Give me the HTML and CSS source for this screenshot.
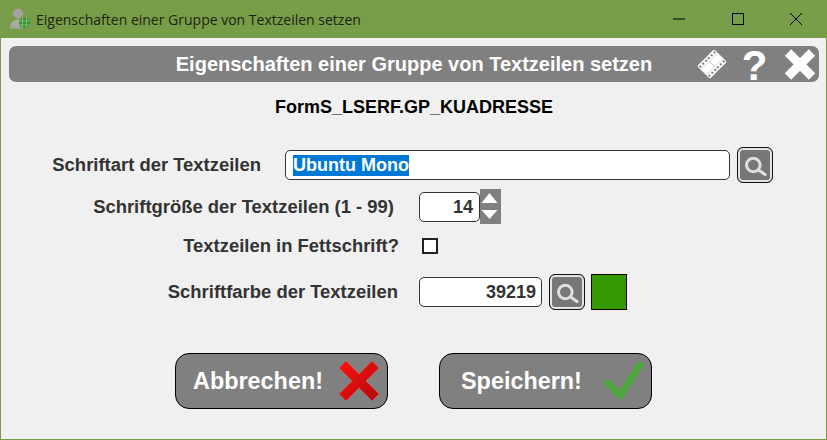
FILE: index.html
```html
<!DOCTYPE html>
<html lang="de">
<head>
    <meta charset="UTF-8">
    <title>Eigenschaften einer Gruppe von Textzeilen setzen</title>
    <link rel="stylesheet" href="styles.css">
</head>
<body>
    <div class="window">
        <div class="titlebar">
            <svg class="app-icon" width="22" height="22" viewBox="0 0 22 22">
                <circle cx="8" cy="5.500" r="5" fill="#a3a3a3"/>
                <path d="M0 20.500c0-6 3-9 8-9s8 3 8 9z" fill="#a9a9a3"/>
                <circle cx="14.500" cy="15" r="5.500" fill="#3f8f3a"/>
                <path d="M9.500 13h10M9.500 17h10M12.500 10v10M16.500 10v10" stroke="#7cc06f" stroke-width="1"/>
            </svg>
            <span class="title-text">Eigenschaften einer Gruppe von Textzeilen setzen</span>
            <div class="win-controls">
                <svg width="46" height="38" viewBox="0 0 46 38"><path d="M16 19h12" stroke="#000"/></svg>
                <svg width="46" height="38" viewBox="0 0 46 38"><rect x="17.5" y="13.5" width="11" height="11" fill="none" stroke="#000"/></svg>
                <svg width="46" height="38" viewBox="0 0 46 38"><path d="M17 13l12 12M29 13L17 25" stroke="#000"/></svg>
            </div>
        </div>

        <div class="content">
            <header class="head-bar">
                <h1>Eigenschaften einer Gruppe von Textzeilen setzen</h1>
                <div class="head-icons">
                    <svg width="34" height="36" viewBox="0 0 34 36">
                        <g transform="rotate(-45 17 18)">
                            <rect x="5" y="9" width="24" height="18" rx="1.500" fill="#fff"/>
                            <path d="M6 11.500h22M6 24.500h22" stroke="#808080" stroke-width="2" stroke-dasharray="2 2"/>
                            <path d="M17 14v8" stroke="#cfcfcf" stroke-width="1"/>
                            <path d="M6 14h22M6 22h22" stroke="#dedede" stroke-width="1"/>
                        </g>
                    </svg>
                    <span class="help-mark">?</span>
                    <svg width="34" height="36" viewBox="0 0 34 36">
                        <path d="M5 6.500l24 24M29 6.500l-24 24" stroke="#fff" stroke-width="9"/>
                    </svg>
                </div>
            </header>

            <p class="form-name">FormS_LSERF.GP_KUADRESSE</p>

            <form class="props">
                <div class="row row-font">
                    <label>Schriftart der Textzeilen</label>
                    <div class="field field-font"><span class="selected">Ubuntu Mono</span></div>
                    <button type="button" class="lookup">
                        <svg width="26" height="26" viewBox="0 0 26 26">
                            <circle cx="11.300" cy="13" r="6.800" fill="none" stroke="#dfdfdf" stroke-width="3"/>
                            <path d="M16.500 18l6.500 4.500" stroke="#dfdfdf" stroke-width="3.200" stroke-linecap="round"/>
                        </svg>
                    </button>
                </div>

                <div class="row row-size">
                    <label>Schriftgröße der Textzeilen (1 - 99)</label>
                    <div class="field field-size">14</div>
                    <div class="spinner">
                        <svg width="21" height="35" viewBox="0 0 21 35">
                            <path d="M9.500 4l8 10h-16zM9.500 30l8-9h-16z" fill="#fff"/>
                        </svg>
                    </div>
                </div>

                <div class="row row-bold">
                    <label>Textzeilen in Fettschrift?</label>
                    <span class="check"></span>
                </div>

                <div class="row row-color">
                    <label>Schriftfarbe der Textzeilen</label>
                    <div class="field field-color">39219</div>
                    <button type="button" class="lookup">
                        <svg width="26" height="26" viewBox="0 0 26 26">
                            <circle cx="11.300" cy="13" r="6.800" fill="none" stroke="#dfdfdf" stroke-width="3"/>
                            <path d="M16.500 18l6.500 4.500" stroke="#dfdfdf" stroke-width="3.200" stroke-linecap="round"/>
                        </svg>
                    </button>
                    <span class="swatch"></span>
                </div>
            </form>

            <div class="actions">
                <button type="button" class="big-btn btn-cancel">
                    <span>Abbrechen!</span>
                    <svg width="42" height="42" viewBox="0 0 42 42">
                        <defs>
                            <linearGradient id="red" x1="0" y1="0" x2="1" y2="1">
                                <stop offset="0" stop-color="#ff1208"/>
                                <stop offset="1" stop-color="#b00a10"/>
                            </linearGradient>
                        </defs>
                        <path d="M8 1l13 13L34 1l7 7-13 13 13 13-7 7-13-13L8 41l-7-7 13-13L1 8z" fill="url(#red)" stroke="#c8585a" stroke-width="1" stroke-linejoin="round"/>
                    </svg>
                </button>
                <button type="button" class="big-btn btn-save">
                    <span>Speichern!</span>
                    <svg width="42" height="42" viewBox="0 0 42 42">
                        <path d="M6 23l12 13L38 5" fill="none" stroke="#4fa53f" stroke-width="7" stroke-linecap="round" stroke-linejoin="round"/>
                    </svg>
                </button>
            </div>
        </div>
    </div>
</body>
</html>
```

FILE: styles.css
```css
html, body {
    margin: 0;
    height: 100%;
}
body {
    background-color: #f0f0f0;
    font-family: "Liberation Sans", Arial, sans-serif;
    overflow: hidden;
}
.window {
    height: 440px;
    box-sizing: border-box;
    border: 1px solid #789d48;
    border-top: 0;
    display: flex;
    flex-direction: column;
}
.titlebar {
    height: 38px;
    flex: none;
    background-color: #789d48;
    display: flex;
    align-items: center;
    padding-left: 9px;
}
.app-icon {
    margin-right: 4px;
}
.title-text {
    font-family: "Open Sans", sans-serif;
    font-size: 14px;
    color: #1c2410;
}
.win-controls {
    margin-left: auto;
    display: flex;
    margin-right: 7px;
    gap: 12px;
}
.content {
    flex: 1;
    padding: 8px 7px 0 8px;
}
.head-bar {
    height: 36px;
    background-color: #808080;
    border-radius: 7px;
    display: flex;
    align-items: center;
    justify-content: center;
    position: relative;
}
h1 {
    margin: 0;
    font-size: 20px;
    color: #fff;
}
.head-icons {
    position: absolute;
    right: 2px;
    top: 0;
    display: flex;
    align-items: center;
    height: 36px;
}
.help-mark {
    width: 54px;
    padding-right: 3px;
    margin-top: 3px;
    box-sizing: border-box;
    text-align: center;
    font-size: 42px;
    line-height: 36px;
    font-weight: bold;
    color: #fff;
}
.form-name {
    margin: 15px 0 0;
    height: 20px;
    line-height: 20px;
    text-align: center;
    font-size: 18px;
    font-weight: bold;
    color: #000;
}
.props {
    margin-top: 30px;
}
.row {
    display: flex;
    align-items: center;
    font-size: 18.450px;
    font-weight: bold;
    color: #333;
}
.row label {
    text-align: right;
    flex: none;
}
.field {
    box-sizing: border-box;
    height: 30px;
    line-height: 28px;
    background-color: #fff;
    border: 1px solid #333;
    border-radius: 5px;
    padding: 0 6px;
    text-align: right;
    font-size: 18px;
}
.row-font {
    height: 36px;
}
.row-font label {
    width: 252px;
}
.field-font {
    width: 445px;
    margin-left: 24px;
    text-align: left;
    padding-left: 7px;
}
.selected {
    background-color: #0078d7;
    color: #fff;
    display: inline-block;
    line-height: 21px;
}
.lookup {
    box-sizing: border-box;
    width: 36px;
    height: 36px;
    padding: 0;
    margin-left: 7px;
    background-color: #777;
    border: 1px solid #111;
    border-radius: 6px;
    box-shadow: inset 0 0 0 2px #e4e4e4;
    display: flex;
    align-items: center;
    justify-content: center;
}
.row-size {
    height: 35px;
    margin-top: 6px;
}
.row-size label {
    width: 385px;
}
.field-size {
    width: 61px;
    margin-left: 25px;
}
.spinner {
    width: 21px;
    height: 35px;
    background-color: #808080;
}
.row-bold {
    height: 20px;
    margin-top: 12px;
}
.row-bold label {
    width: 390px;
}
.check {
    box-sizing: border-box;
    width: 16px;
    height: 16px;
    margin-left: 23px;
    background-color: #fff;
    border: 2px solid #222;
}
.row-color {
    height: 36px;
    margin-top: 18px;
}
.row-color label {
    width: 389px;
}
.field-color {
    width: 123px;
    margin-left: 21px;
    padding-right: 5px;
}
.swatch {
    box-sizing: border-box;
    width: 36px;
    height: 36px;
    margin-left: 6px;
    background-color: #339900;
    border: 1px solid #000;
}
.actions {
    margin-top: 43px;
    padding-left: 166px;
    display: flex;
    gap: 51px;
}
.big-btn {
    box-sizing: border-box;
    width: 213px;
    height: 56px;
    background-color: #808080;
    border: 1px solid #000;
    border-radius: 14px;
    color: #fff;
    font-family: inherit;
    font-size: 23.400px;
    font-weight: bold;
    display: flex;
    align-items: center;
    justify-content: space-between;
    padding: 0 7px 0 17px;
}
.btn-save {
    padding-left: 21px;
}
```
